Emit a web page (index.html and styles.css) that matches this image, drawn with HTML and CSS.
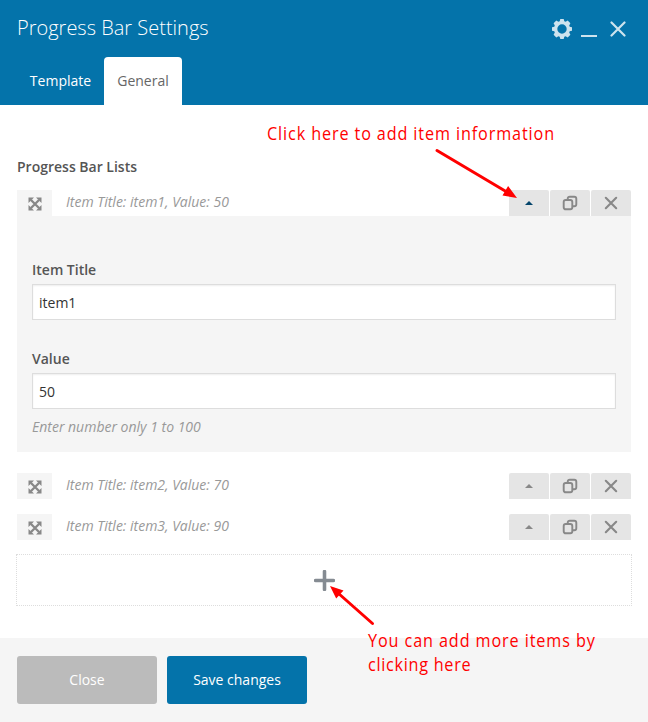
FILE: index.html
```html
<!DOCTYPE html>
<html lang="en">
<head>
<meta charset="utf-8">
<title>Progress Bar Settings</title>
<link rel="stylesheet" href="styles.css">
</head>
<body>
<svg class="sprite" aria-hidden="true">
  <symbol id="move" viewBox="0 0 14 14"><path d="M3 3l8 8M11 3l-8 8" stroke="currentColor" stroke-width="2.300"/><path d="M.5.5h5.500l-5.500 5.500zM13.500.5v5.500l-5.500-5.500zM.5 13.500v-5.500l5.500 5.500zM13.500 13.500h-5.500l5.500-5.500z" fill="currentColor"/></symbol>
  <symbol id="up" viewBox="0 0 8 4"><path d="M0 4l4-4 4 4z" fill="currentColor"/></symbol>
  <symbol id="copy" viewBox="0 0 16 16"><g fill="none" stroke="currentColor" stroke-width="1.900"><rect x="1.700" y="5" width="8.600" height="9.300" rx="2"/><path d="M5.700 5V3.700a2 2 0 0 1 2-2h4.600a2 2 0 0 1 2 2v5.600a2 2 0 0 1-2 2h-2"/></g></symbol>
  <symbol id="cross" viewBox="0 0 14 14"><path d="M1.800 1.800l10.400 10.400M12.200 1.800l-10.400 10.400" stroke="currentColor" stroke-width="2.100" stroke-linecap="round"/></symbol>
</svg>
<div class="dialog">
  <header class="header">
    <div class="titlebar">
      <h1 class="title">Progress Bar Settings</h1>
      <div class="window-tools">
        <svg class="gear" viewBox="0 0 20 20"><path fill="currentColor" fill-rule="evenodd" d="M8.300 0h3.400l.6 2.300 1.300.5 2.100-1.200 2.700 2.700-1.200 2.100.5 1.300 2.300.6v3.400l-2.300.6-.5 1.300 1.200 2.100-2.700 2.700-2.100-1.200-1.300.5-.6 2.300H8.300l-.6-2.300-1.300-.5-2.100 1.200-2.700-2.700 1.200-2.100-.5-1.300L0 11.700V8.300l2.300-.6.5-1.300-1.200-2.100 2.700-2.700 2.100 1.200 1.300-.5zM10 5.300a4.700 4.700 0 1 0 0 9.400 4.700 4.700 0 0 0 0-9.400z"/></svg>
        <span class="minimize"></span>
        <svg class="close-icon" viewBox="0 0 16 16"><path d="M1.500 1.500l13 13M14.500 1.500l-13 13" stroke="currentColor" stroke-width="2.200" stroke-linecap="round"/></svg>
      </div>
    </div>
    <nav class="tabs"><a class="tab">Template</a><a class="tab active">General</a></nav>
  </header>
  <main class="content">
    <div class="list-label">Progress Bar Lists</div>
    <div class="row open">
      <span class="handle"><svg><use href="#move"/></svg></span>
      <span class="summary">Item Title: item1, Value: 50</span>
      <div class="controls"><span class="control"><svg class="up"><use href="#up"/></svg></span><span class="control"><svg class="copy"><use href="#copy"/></svg></span><span class="control"><svg class="cross"><use href="#cross"/></svg></span></div>
    </div>
    <section class="panel">
      <label class="field-label" for="item-title">Item Title</label>
      <input class="field" id="item-title" value="item1">
      <label class="field-label second" for="item-value">Value</label>
      <input class="field" id="item-value" value="50">
      <p class="hint">Enter number only 1 to 100</p>
    </section>
    <div class="row">
      <span class="handle"><svg><use href="#move"/></svg></span>
      <span class="summary">Item Title: item2, Value: 70</span>
      <div class="controls"><span class="control"><svg class="up"><use href="#up"/></svg></span><span class="control"><svg class="copy"><use href="#copy"/></svg></span><span class="control"><svg class="cross"><use href="#cross"/></svg></span></div>
    </div>
    <div class="row last">
      <span class="handle"><svg><use href="#move"/></svg></span>
      <span class="summary">Item Title: item3, Value: 90</span>
      <div class="controls"><span class="control"><svg class="up"><use href="#up"/></svg></span><span class="control"><svg class="copy"><use href="#copy"/></svg></span><span class="control"><svg class="cross"><use href="#cross"/></svg></span></div>
    </div>
    <div class="add"><svg viewBox="0 0 20 20"><path d="M10 1.500v17M1.500 10h17" stroke="currentColor" stroke-width="3.400" stroke-linecap="round"/></svg></div>
  </main>
  <footer class="footer"><button class="button close">Close</button><button class="button save">Save changes</button></footer>
  <svg class="notes" viewBox="0 0 648 722">
    <g stroke="#f00" stroke-width="3" stroke-linecap="round"><path d="M437 150.500L506 191.500"/><path d="M372.500 623.500L338 593"/></g>
    <path d="M517 198l-14.500-2.600 5.600-9.400zM330 586l13.500 4.500-7.300 8z" fill="#f00"/>
    <g class="note-text">
      <text transform="translate(267 140) scale(.9 1)" textLength="319">Click here to add item information</text>
      <text transform="translate(368 647) scale(.9 1)" textLength="252">You can add more items by</text>
      <text transform="translate(368 671) scale(.9 1)" textLength="114">clicking here</text>
    </g>
  </svg>
</div>
</body>
</html>
```
FILE: styles.css
```css
* { box-sizing: border-box; }
body { margin: 0; background: #fff; color: #555; font: 14px/20px "Open Sans", sans-serif; }
.sprite { position: absolute; width: 0; height: 0; }
.dialog { position: relative; width: 648px; height: 722px; display: flex; flex-direction: column; overflow: hidden; }
.header { height: 105px; background: #0473aa; color: #fff; display: flex; flex-direction: column; flex: none; }
.titlebar { height: 57px; padding: 0 21px 0 17px; display: flex; justify-content: space-between; }
.title { margin: 13px 0 0; font-size: 20px; line-height: 30px; font-weight: 320; }
.window-tools { display: flex; height: 40px; margin-top: 9px; align-items: center; color: #cde3ee; }
.gear { width: 20px; height: 20px; }
.minimize { width: 16px; height: 2px; margin: 14px 13px 0 9px; background: currentColor; }
.close-icon { width: 16px; height: 16px; margin-right: 1px; }
.tabs { display: flex; padding-left: 17px; height: 48px; }
.tab { width: 87px; text-align: center; line-height: 48px; font-weight: 530; }
.tab.active { width: 78px; background: #fff; color: #666; font-weight: 400; border-radius: 4px 4px 0 0; }
.content { height: 533px; padding: 52px 17px 0; flex: none; }
.list-label { height: 33px; font-weight: 600; }
.row { display: flex; height: 26px; margin-bottom: 15px; }
.row.open { margin-bottom: 0; }
.row.last { margin-bottom: 14px; }
.handle { width: 35px; background: #f5f5f5; color: #888; display: flex; align-items: center; justify-content: center; }
.handle svg { width: 14px; height: 14px; margin-top: 1px; }
.summary { margin-left: 14px; font-style: italic; line-height: 24px; color: #999; }
.controls { display: flex; gap: 1px; margin-left: auto; }
.control { width: 40px; background: #e5e5e5; color: #888; border-radius: 2px 2px 0 0; display: flex; align-items: center; justify-content: center; }
.up { width: 8px; height: 4px; }
.open .up { color: #04456b; }
.copy { width: 16px; height: 16px; }
.cross { width: 14px; height: 14px; }
.panel { height: 236px; margin-bottom: 21px; padding: 44px 15px 0; background: #f5f5f5; }
.field-label { display: block; height: 24px; font-weight: 600; }
.field-label.second { margin-top: 29px; }
.field { display: block; width: 100%; height: 36px; border: 1px solid #ddd; padding: 0 6px; background: #fff; color: #333; font: 14px "Open Sans", sans-serif; box-shadow: inset 0 1px 2px rgba(0,0,0,.07); }
.hint { margin: 8px 0 0; color: #999; font-style: italic; }
.add { height: 52px; margin: 0 -1px; border: 1px dotted #ddd; display: flex; align-items: center; justify-content: center; color: #858b92; }
.add svg { width: 21px; height: 21px; }
.footer { height: 84px; background: #f5f5f5; padding: 18px 17px; display: flex; gap: 10px; }
.button { width: 140px; height: 48px; padding: 0 0 2px; border: 0; border-radius: 3px; color: #fff; font: 14px "Open Sans", sans-serif; }
.close { background: #bbb; }
.save { background: #0473aa; font-weight: 530; }
.notes { position: absolute; inset: 0; width: 648px; height: 722px; pointer-events: none; }
.note-text { font: 390 18px "Open Sans", sans-serif; fill: #f00; }
```
